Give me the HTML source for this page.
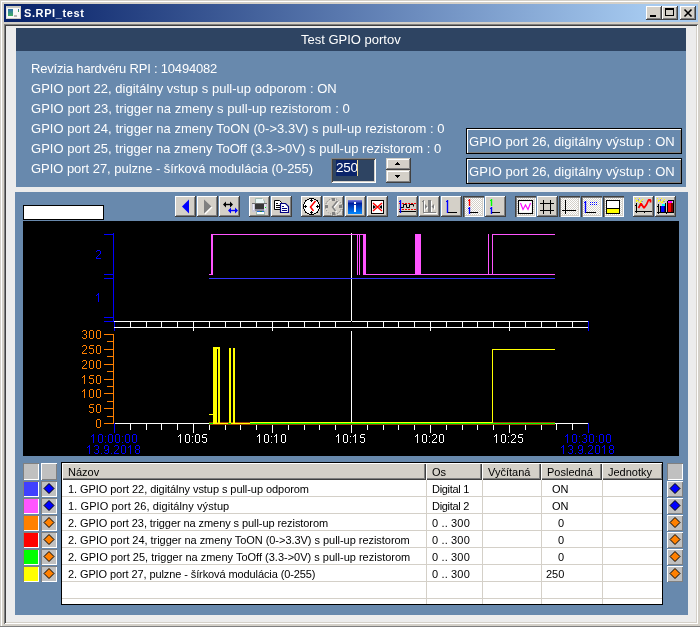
<!DOCTYPE html><html><head><meta charset="utf-8"><style>
*{margin:0;padding:0;box-sizing:border-box}
html,body{width:700px;height:627px;overflow:hidden;background:#D4D0C8;font-family:"Liberation Sans", sans-serif;position:relative}
.a{position:absolute}
.t{position:absolute;white-space:pre;line-height:1;will-change:transform}
svg{will-change:transform}
.raised{box-shadow:inset -1px -1px #404040,inset 1px 1px #fff,inset -2px -2px #808080}
.sunken{box-shadow:inset 1px 1px #808080,inset -1px -1px #fff,inset 2px 2px #404040,inset -2px -2px #D4D0C8}

</style></head><body>
<div class="a" style="left:1px;top:1px;width:698px;height:1px;background:#fff;"></div>
<div class="a" style="left:1px;top:1px;width:1px;height:626px;background:#fff;"></div>
<div class="a" style="left:4px;top:4px;width:694px;height:18px;background:linear-gradient(90deg,#0A246A 18px,#A6CAF0 646px);"></div>
<div class="a" style="left:6px;top:6px;width:15px;height:13px;background:#F8F8F8;border-top:2px solid #C8C8C0;border-bottom:1px solid #D4D0C8;border-left:1px solid #E0E0E0;border-right:1px solid #D4D0C8"></div>
<div class="a" style="left:8px;top:9px;width:5px;height:7px;background:linear-gradient(180deg,#3070B0,#40B060);"></div>
<div class="a" style="left:18px;top:9px;width:1px;height:3px;background:linear-gradient(180deg,#3060C0,#40B040);"></div>
<div class="a" style="left:14px;top:15px;width:3px;height:2px;background:#b8b8b8;"></div>
<div class="t" style="left:23.5px;top:8px;font-size:11px;color:#fff;font-weight:bold;letter-spacing:0.6px">S.RPI_test</div>
<div class="a raised" style="left:646px;top:6px;width:16px;height:14px;background:#D4D0C8"></div>
<div class="a raised" style="left:662px;top:6px;width:16px;height:14px;background:#D4D0C8"></div>
<div class="a raised" style="left:680px;top:6px;width:16px;height:14px;background:#D4D0C8"></div>
<div class="a" style="left:650px;top:15px;width:6px;height:2px;background:#000;"></div>
<div class="a" style="left:665px;top:8px;width:9px;height:8px;border:1px solid #000;border-top-width:2px"></div>
<svg class="a" style="left:680px;top:6px" width="16" height="14"><path d="M4.5 3.5 L11.5 10.5 M11.5 3.5 L4.5 10.5" stroke="#000" stroke-width="1.6"/></svg>
<div class="a" style="left:4px;top:24px;width:694px;height:600px;background:#ECECEC;box-shadow:inset 1px 1px #808080,inset -1px -1px #fff,inset 2px 2px #404040,inset -2px -2px #D4D0C8"></div>
<div class="a" style="left:0px;top:626px;width:700px;height:1px;background:#808080;"></div>
<div class="a" style="left:16px;top:28px;width:670px;height:159px;background:#6889AD;"></div>
<div class="a" style="left:16px;top:28px;width:670px;height:23px;background:#2E4462;"></div>
<div class="t" style="left:301px;top:33px;font-size:13px;color:#fff;">Test GPIO portov</div>
<div class="t" style="left:31px;top:62px;font-size:13px;color:#fff;letter-spacing:-0.2px">Revízia hardvéru RPI : 10494082</div>
<div class="t" style="left:31px;top:82px;font-size:13px;color:#fff;letter-spacing:0.03px">GPIO port 22, digitálny vstup s pull-up odporom : ON</div>
<div class="t" style="left:31px;top:102px;font-size:13px;color:#fff;letter-spacing:0.055px">GPIO port 23, trigger na zmeny s pull-up rezistorom : 0</div>
<div class="t" style="left:31px;top:122px;font-size:13px;color:#fff;letter-spacing:0.043px">GPIO port 24, trigger na zmeny ToON (0-&gt;3.3V) s pull-up rezistorom : 0</div>
<div class="t" style="left:31px;top:142px;font-size:13px;color:#fff;letter-spacing:0.03px">GPIO port 25, trigger na zmeny ToOff (3.3-&gt;0V) s pull-up rezistorom : 0</div>
<div class="t" style="left:31px;top:162px;font-size:13px;color:#fff;letter-spacing:-0.04px">GPIO port 27, pulzne - šírková modulácia (0-255)</div>
<div class="a" style="left:331px;top:158px;width:45px;height:25px;background:#2E4462;box-shadow:inset 1px 1px #808080,inset -1px -1px #fff,inset 2px 2px #404040,inset -2px -2px #D4D0C8"></div>
<div class="a" style="left:336px;top:160px;width:21px;height:16px;background:#0A246A;"></div>
<div class="t" style="left:335.5px;top:161px;font-size:13.5px;color:#fff;letter-spacing:-0.25px">250</div>
<div class="a" style="left:357px;top:160px;width:1px;height:16px;background:#F0D890;"></div>
<div class="a" style="left:386px;top:158px;width:25px;height:12px;background:#D4D0C8;box-shadow:inset -1px -1px #404040,inset 1px 1px #D4D0C8,inset -2px -2px #808080,inset 2px 2px #fff"></div>
<div class="a" style="left:386px;top:170px;width:25px;height:13px;background:#D4D0C8;box-shadow:inset -1px -1px #404040,inset 1px 1px #D4D0C8,inset -2px -2px #808080,inset 2px 2px #fff"></div>
<div class="a" style="left:397px;top:162px;width:1px;height:1px;background:#000;"></div>
<div class="a" style="left:396px;top:163px;width:3px;height:1px;background:#000;"></div>
<div class="a" style="left:395px;top:164px;width:5px;height:1px;background:#000;"></div>
<div class="a" style="left:395px;top:175px;width:5px;height:1px;background:#000;"></div>
<div class="a" style="left:396px;top:176px;width:3px;height:1px;background:#000;"></div>
<div class="a" style="left:397px;top:177px;width:1px;height:1px;background:#000;"></div>
<div class="a" style="left:466px;top:128px;width:216px;height:26px;background:#6889AD;box-shadow:inset 1px 1px #000,inset -1px -1px #000,inset 2px 2px #fff,inset -2px -2px #808080"></div>
<div class="t" style="left:469px;top:135px;font-size:13px;color:#fff;letter-spacing:0.08px">GPIO port 26, digitálny výstup : ON</div>
<div class="a" style="left:466px;top:158px;width:216px;height:26px;background:#6889AD;box-shadow:inset 1px 1px #000,inset -1px -1px #000,inset 2px 2px #fff,inset -2px -2px #808080"></div>
<div class="t" style="left:469px;top:165px;font-size:13px;color:#fff;letter-spacing:0.08px">GPIO port 26, digitálny výstup : ON</div>
<div class="a" style="left:15px;top:192px;width:673px;height:423px;background:#6889AD;"></div>
<div class="a" style="left:23px;top:205px;width:81px;height:15px;background:#fff;border:1px solid #000"></div>
<div class="a" style="left:23px;top:221px;width:656px;height:235px;background:#000;"></div>
<div class="a" style="left:175px;top:196px;width:21px;height:21px;box-shadow:inset -1px -1px #404040,inset 1px 1px #fff,inset -2px -2px #808080;background:#D4D0C8"></div>
<div class="a" style="left:197px;top:196px;width:21px;height:21px;box-shadow:inset -1px -1px #404040,inset 1px 1px #fff,inset -2px -2px #808080;background:#D4D0C8"></div>
<div class="a" style="left:219px;top:196px;width:21px;height:21px;box-shadow:inset -1px -1px #404040,inset 1px 1px #fff,inset -2px -2px #808080;background:#D4D0C8"></div>
<div class="a" style="left:249px;top:196px;width:21px;height:21px;box-shadow:inset -1px -1px #404040,inset 1px 1px #fff,inset -2px -2px #808080;background:#D4D0C8"></div>
<div class="a" style="left:271px;top:196px;width:21px;height:21px;box-shadow:inset -1px -1px #404040,inset 1px 1px #fff,inset -2px -2px #808080;background:#D4D0C8"></div>
<div class="a" style="left:301px;top:196px;width:21px;height:21px;box-shadow:inset -1px -1px #404040,inset 1px 1px #fff,inset -2px -2px #808080;background:#D4D0C8"></div>
<div class="a" style="left:323px;top:196px;width:21px;height:21px;box-shadow:inset -1px -1px #404040,inset 1px 1px #fff,inset -2px -2px #808080;background:#D4D0C8"></div>
<div class="a" style="left:345px;top:196px;width:21px;height:21px;box-shadow:inset -1px -1px #404040,inset 1px 1px #fff,inset -2px -2px #808080;background:#D4D0C8"></div>
<div class="a" style="left:367px;top:196px;width:21px;height:21px;box-shadow:inset -1px -1px #404040,inset 1px 1px #fff,inset -2px -2px #808080;background:#D4D0C8"></div>
<div class="a" style="left:397px;top:196px;width:21px;height:21px;box-shadow:inset -1px -1px #404040,inset 1px 1px #fff,inset -2px -2px #808080;background:#D4D0C8"></div>
<div class="a" style="left:419px;top:196px;width:21px;height:21px;box-shadow:inset -1px -1px #404040,inset 1px 1px #fff,inset -2px -2px #808080;background:#D4D0C8"></div>
<div class="a" style="left:441px;top:196px;width:21px;height:21px;box-shadow:inset -1px -1px #404040,inset 1px 1px #fff,inset -2px -2px #808080;background:#D4D0C8"></div>
<div class="a" style="left:463px;top:196px;width:21px;height:21px;box-shadow:inset 1px 1px #404040,inset 2px 2px #808080,inset -1px -1px #fff,inset -2px -2px #D4D0C8;background-color:#D4D0C8;background-image:repeating-conic-gradient(#fff 0 25%,#D4D0C8 0 50%);background-size:2px 2px;background-position:1px 0"></div>
<div class="a" style="left:485px;top:196px;width:21px;height:21px;box-shadow:inset -1px -1px #404040,inset 1px 1px #fff,inset -2px -2px #808080;background:#D4D0C8"></div>
<div class="a" style="left:515px;top:196px;width:21px;height:21px;box-shadow:inset 1px 1px #404040,inset 2px 2px #808080,inset -1px -1px #fff,inset -2px -2px #D4D0C8;background-color:#D4D0C8;background-image:repeating-conic-gradient(#fff 0 25%,#D4D0C8 0 50%);background-size:2px 2px;background-position:1px 0"></div>
<div class="a" style="left:537px;top:196px;width:21px;height:21px;box-shadow:inset -1px -1px #404040,inset 1px 1px #fff,inset -2px -2px #808080;background:#D4D0C8"></div>
<div class="a" style="left:559px;top:196px;width:21px;height:21px;box-shadow:inset 1px 1px #404040,inset 2px 2px #808080,inset -1px -1px #fff,inset -2px -2px #D4D0C8;background-color:#D4D0C8;background-image:repeating-conic-gradient(#fff 0 25%,#D4D0C8 0 50%);background-size:2px 2px;background-position:1px 0"></div>
<div class="a" style="left:581px;top:196px;width:21px;height:21px;box-shadow:inset 1px 1px #404040,inset 2px 2px #808080,inset -1px -1px #fff,inset -2px -2px #D4D0C8;background-color:#D4D0C8;background-image:repeating-conic-gradient(#fff 0 25%,#D4D0C8 0 50%);background-size:2px 2px;background-position:1px 0"></div>
<div class="a" style="left:603px;top:196px;width:21px;height:21px;box-shadow:inset 1px 1px #404040,inset 2px 2px #808080,inset -1px -1px #fff,inset -2px -2px #D4D0C8;background-color:#D4D0C8;background-image:repeating-conic-gradient(#fff 0 25%,#D4D0C8 0 50%);background-size:2px 2px;background-position:1px 0"></div>
<div class="a" style="left:633px;top:196px;width:21px;height:21px;box-shadow:inset -1px -1px #404040,inset 1px 1px #fff,inset -2px -2px #808080;background:#D4D0C8"></div>
<div class="a" style="left:655px;top:196px;width:21px;height:21px;box-shadow:inset -1px -1px #404040,inset 1px 1px #fff,inset -2px -2px #808080;background:#D4D0C8"></div>
<svg class="a" style="left:0;top:0" width="700" height="230" viewBox="0 0 700 230"><path d="M182 206.5 L189 199.5 L189 213.5 Z" fill="#0000FF"/><path d="M204 199.5 L211.5 206.5 L204 213.5 Z" fill="#808080"/><path d="M212 207 L205 214" stroke="#fff" stroke-width="1.2"/><path d="M224 204.5 L232 204.5" stroke="#000" stroke-width="1.4"/><path d="M223 204.5 L226 201.5 L226 207.5 Z M233 204.5 L230 201.5 L230 207.5 Z" fill="#000"/><path d="M229 210.5 L237 210.5" stroke="#00f" stroke-width="1.4"/><path d="M228 210.5 L231 207.5 L231 213.5 Z M238 210.5 L235 207.5 L235 213.5 Z" fill="#00f"/><path d="M255.5 198.5 H262 L264.5 201 V203.5 H255.5 Z" fill="#E8F4F4" stroke="#A0B8B0"/><rect x="262" y="199" width="1" height="1" fill="#fff"/><rect x="252" y="203" width="15" height="9" fill="#C8C8D8"/><rect x="252" y="203" width="15" height="1" fill="#707070"/><rect x="255" y="204" width="9" height="5" fill="#383838"/><rect x="255" y="209" width="9" height="2" fill="#9090A0"/><rect x="253" y="204" width="1" height="6" fill="#F0F0F8"/><rect x="264" y="204" width="2" height="6" fill="#E0E0F0"/><rect x="256.5" y="211.5" width="8" height="3" fill="#fff" stroke="#A0B8B0"/><rect x="257" y="211" width="3" height="1" fill="#2070E0"/><rect x="260" y="211" width="2" height="1" fill="#208040"/><rect x="262" y="211" width="2" height="1" fill="#2070E0"/><rect x="265" y="207" width="1" height="1" fill="#0f0"/><path d="M274.5 200.5 H279.5 L281.5 202.5 V209.5 H274.5 Z" fill="#fff" stroke="#000"/><path d="M276 203.5 H278 M276 205.5 H280 M276 207.5 H280" stroke="#000"/><path d="M280.5 203.5 H285.5 L288.5 206.5 V212.5 H280.5 Z" fill="#fff" stroke="#000080" stroke-width="1.2"/><path d="M282 206.5 H284 M282 208.5 H287 M282 210.5 H287" stroke="#000080"/><circle cx="311.5" cy="206.5" r="7.6" fill="#fff"/><rect x="309" y="198" width="5" height="1" fill="#000"/><rect x="307" y="199" width="2" height="1" fill="#000"/><rect x="311" y="199" width="1" height="1" fill="#000"/><rect x="314" y="199" width="2" height="1" fill="#000"/><rect x="305" y="200" width="2" height="1" fill="#000"/><rect x="310" y="200" width="3" height="1" fill="#000"/><rect x="316" y="200" width="2" height="1" fill="#000"/><rect x="305" y="201" width="1" height="1" fill="#000"/><rect x="311" y="201" width="1" height="1" fill="#000"/><rect x="317" y="201" width="1" height="1" fill="#000"/><rect x="304" y="202" width="1" height="1" fill="#000"/><rect x="318" y="202" width="1" height="1" fill="#000"/><rect x="304" y="203" width="1" height="1" fill="#000"/><rect x="318" y="203" width="1" height="1" fill="#000"/><rect x="303" y="204" width="1" height="1" fill="#000"/><rect x="319" y="204" width="1" height="1" fill="#000"/><rect x="303" y="205" width="1" height="1" fill="#000"/><rect x="305" y="205" width="1" height="1" fill="#000"/><rect x="317" y="205" width="1" height="1" fill="#000"/><rect x="319" y="205" width="1" height="1" fill="#000"/><rect x="303" y="206" width="4" height="1" fill="#000"/><rect x="316" y="206" width="4" height="1" fill="#000"/><rect x="303" y="207" width="1" height="1" fill="#000"/><rect x="305" y="207" width="1" height="1" fill="#000"/><rect x="317" y="207" width="1" height="1" fill="#000"/><rect x="319" y="207" width="1" height="1" fill="#000"/><rect x="303" y="208" width="1" height="1" fill="#000"/><rect x="319" y="208" width="1" height="1" fill="#000"/><rect x="304" y="209" width="1" height="1" fill="#000"/><rect x="318" y="209" width="1" height="1" fill="#000"/><rect x="304" y="210" width="1" height="1" fill="#000"/><rect x="318" y="210" width="1" height="1" fill="#000"/><rect x="305" y="211" width="1" height="1" fill="#000"/><rect x="311" y="211" width="1" height="1" fill="#000"/><rect x="317" y="211" width="1" height="1" fill="#000"/><rect x="305" y="212" width="2" height="1" fill="#000"/><rect x="310" y="212" width="3" height="1" fill="#000"/><rect x="316" y="212" width="2" height="1" fill="#000"/><rect x="307" y="213" width="2" height="1" fill="#000"/><rect x="311" y="213" width="1" height="1" fill="#000"/><rect x="314" y="213" width="2" height="1" fill="#000"/><rect x="309" y="214" width="5" height="1" fill="#000"/><path d="M315.5 201 L310.5 207 L313.5 211" stroke="#f00" stroke-width="1.5" fill="none"/><circle cx="333.5" cy="206.5" r="8" fill="none" stroke="#808080" stroke-width="1" stroke-dasharray="1.5 1"/><circle cx="334.5" cy="207.5" r="8" fill="none" stroke="#fff" stroke-width="0.6" stroke-dasharray="1.5 1"/><rect x="332" y="198" width="3" height="3" fill="#808080"/><rect x="332" y="212" width="3" height="3" fill="#808080"/><rect x="325" y="205" width="3" height="3" fill="#808080"/><rect x="339" y="205" width="3" height="3" fill="#808080"/><path d="M338.5 202 L333.5 208 L336.5 212" stroke="#fff" stroke-width="1.2" fill="none"/><path d="M337.5 201 L332.5 207 L335.5 211" stroke="#808080" stroke-width="1.5" fill="none"/><defs><linearGradient id="ig" x1="0" y1="0" x2="0" y2="1"><stop offset="0" stop-color="#8080E0"/><stop offset="0.25" stop-color="#0020A0"/><stop offset="1" stop-color="#0088FF"/></linearGradient></defs><rect x="348" y="200" width="14" height="14" fill="url(#ig)"/><rect x="354" y="202" width="2" height="2" fill="#fff"/><rect x="354" y="205" width="2" height="7" fill="#fff"/><rect x="371.5" y="200.5" width="12" height="13" fill="#fff" stroke="#000"/><path d="M373 203 L382 211 M382 203 L373 211" stroke="#f00" stroke-width="1.4"/><path d="M373 205 L376 207 L373 209 Z M382 205 L379 207 L382 209 Z" fill="#000"/><path d="M399 203.5 H416 M399 209.5 H416" stroke="#f00" stroke-dasharray="2 1"/><path d="M401 207.5 H403.5 V204.5 H406.5 V207.5 H409.5 V204.5 H413.5 V206.5" stroke="#000" fill="none"/><path d="M399 211.5 H416" stroke="#000"/><path d="M400.5 200 V213" stroke="#00f" stroke-width="1.3"/><path d="M399 201.5 H400" stroke="#00f"/><path d="M424.5 201 V214 M424 213.5 H437 M423 202.5 H424" stroke="#fff"/><rect x="429" y="201" width="3" height="12" fill="#fff"/><path d="M426 207.5 H428 M433 207.5 H435" stroke="#fff"/><path d="M428.5 207.5 L426 205 L426 210 Z M432.5 207.5 L435 205 L435 210 Z" fill="#fff"/><path d="M423.5 200 V213 M423 212.5 H436 M422 201.5 H423" stroke="#808080"/><rect x="428" y="200" width="3" height="12" fill="#808080"/><path d="M425 206.5 H427 M432 206.5 H434" stroke="#808080"/><path d="M427.5 206.5 L425 204 L425 209 Z M431.5 206.5 L434 204 L434 209 Z" fill="#808080"/><path d="M447.5 200 V213" stroke="#00f" stroke-width="1.4"/><path d="M446 201.5 H447" stroke="#00f"/><path d="M448 212.5 H457" stroke="#000"/><path d="M469.5 199 V206" stroke="#f00" stroke-width="1.4"/><path d="M468 200.5 H469" stroke="#f00"/><path d="M469.5 207 V214" stroke="#00f" stroke-width="1.4"/><path d="M468 208.5 H469" stroke="#00f"/><path d="M470 212.5 H478" stroke="#000"/><path d="M491.5 199 V206" stroke="#0f0" stroke-width="1.4"/><path d="M490 200.5 H491" stroke="#0f0"/><path d="M491.5 207 V214" stroke="#00f" stroke-width="1.4"/><path d="M490 208.5 H491" stroke="#00f"/><path d="M492 212.5 H500" stroke="#000"/><rect x="518.5" y="200.5" width="14" height="13" fill="#fff" stroke="#000" stroke-width="1.1"/><path d="M520.5 203 L523 209.5 L525.5 205 L528 209.5 L530.5 203" stroke="#f0f" stroke-width="1.1" fill="none"/><path d="M543.5 200 V214 M550.5 200 V214 M540 203.5 H554 M540 210.5 H554" stroke="#000"/><path d="M565.5 200 V214 M562 210.5 H576" stroke="#000"/><path d="M585.5 201 V213" stroke="#00f" stroke-width="1.4"/><path d="M584 202.5 H585" stroke="#00f"/><path d="M586 212.5 H596" stroke="#000"/><path d="M590 202.5 H598 M590 204.5 H598" stroke="#00f" stroke-dasharray="1 1"/><rect x="606.5" y="200.5" width="13" height="13" fill="#fff" stroke="#000"/><rect x="607" y="209" width="12" height="4" fill="#ff0"/><path d="M607 208.5 H619" stroke="#000"/><rect x="635" y="198" width="1" height="1" fill="#ff0"/><rect x="639" y="198" width="1" height="1" fill="#ff0"/><rect x="642" y="199" width="1" height="1" fill="#ff0"/><rect x="636" y="200" width="1" height="1" fill="#ff0"/><rect x="638" y="201" width="1" height="1" fill="#ff0"/><rect x="641" y="200" width="1" height="1" fill="#ff0"/><rect x="636" y="201" width="1" height="1" fill="#ff0"/><rect x="639" y="202" width="1" height="1" fill="#ff0"/><rect x="640" y="202" width="1" height="1" fill="#ff0"/><rect x="637" y="200" width="1" height="1" fill="#ff0"/><rect x="640" y="201" width="1" height="1" fill="#ff0"/><rect x="638" y="199" width="1" height="2" fill="#9898A8"/><rect x="641" y="201" width="2" height="1" fill="#9898A8"/><rect x="636" y="203" width="1" height="10" fill="#000"/><rect x="635" y="211" width="17" height="1" fill="#000"/><rect x="636" y="212" width="1" height="1" fill="#000"/><rect x="644" y="212" width="1" height="1" fill="#000"/><rect x="635" y="205" width="1" height="1" fill="#000"/><path d="M638.5 208 L641 203.5 L644 208 L646.5 204.5 L648.5 200 H650.5 V202.5" stroke="#f00" stroke-width="1.8" fill="none" stroke-linejoin="bevel"/><rect x="657" y="198" width="1" height="1" fill="#ff0"/><rect x="661" y="198" width="1" height="1" fill="#ff0"/><rect x="664" y="199" width="1" height="1" fill="#ff0"/><rect x="658" y="200" width="1" height="1" fill="#ff0"/><rect x="660" y="201" width="1" height="1" fill="#ff0"/><rect x="663" y="200" width="1" height="1" fill="#ff0"/><rect x="658" y="201" width="1" height="1" fill="#ff0"/><rect x="661" y="202" width="1" height="1" fill="#ff0"/><rect x="662" y="202" width="1" height="1" fill="#ff0"/><rect x="659" y="200" width="1" height="1" fill="#ff0"/><rect x="662" y="201" width="1" height="1" fill="#ff0"/><rect x="660" y="199" width="1" height="2" fill="#9898A8"/><rect x="663" y="201" width="2" height="1" fill="#9898A8"/><rect x="658" y="204" width="1" height="9" fill="#000"/><rect x="657" y="212" width="17" height="1" fill="#000"/><rect x="658" y="213" width="1" height="1" fill="#000"/><rect x="666" y="213" width="1" height="1" fill="#000"/><rect x="657" y="206" width="1" height="1" fill="#000"/><rect x="661" y="206" width="3" height="6" fill="#0000FF"/><rect x="664" y="206" width="1" height="6" fill="#000080"/><rect x="662" y="204" width="3" height="2" fill="#00FFFF"/><rect x="665" y="203" width="1" height="9" fill="#000"/><rect x="660" y="206" width="1" height="6" fill="#000"/><rect x="667" y="201" width="1" height="11" fill="#000"/><rect x="668" y="200" width="5" height="1" fill="#000"/><rect x="673" y="200" width="1" height="12" fill="#000"/><rect x="668" y="201" width="4" height="2" fill="#FF00FF"/><rect x="668" y="203" width="3" height="9" fill="#FF0000"/><rect x="671" y="203" width="2" height="9" fill="#800000"/></svg>
<svg class="a" style="left:0;top:0" width="700" height="460" viewBox="0 0 700 460" shape-rendering="crispEdges"><rect x="113" y="233" width="1" height="89" fill="#0000FF"/><rect x="104" y="234" width="9" height="1" fill="#0000FF"/><rect x="104" y="274" width="9" height="1" fill="#0000FF"/><rect x="104" y="278" width="9" height="1" fill="#0000FF"/><rect x="104" y="317" width="9" height="1" fill="#0000FF"/><rect x="104" y="321" width="9" height="1" fill="#0000FF"/><rect x="114" y="321" width="1" height="10" fill="#0000FF"/><rect x="114" y="321" width="474" height="1" fill="#FFFFFF"/><rect x="114" y="327" width="474" height="1" fill="#FFFFFF"/><rect x="130" y="322" width="1" height="5" fill="#FFFFFF"/><rect x="146" y="322" width="1" height="5" fill="#FFFFFF"/><rect x="161" y="322" width="1" height="5" fill="#FFFFFF"/><rect x="177" y="322" width="1" height="5" fill="#FFFFFF"/><rect x="193" y="322" width="1" height="5" fill="#FFFFFF"/><rect x="193" y="328" width="1" height="3" fill="#FFFFFF"/><rect x="209" y="322" width="1" height="5" fill="#FFFFFF"/><rect x="225" y="322" width="1" height="5" fill="#FFFFFF"/><rect x="240" y="322" width="1" height="5" fill="#FFFFFF"/><rect x="256" y="322" width="1" height="5" fill="#FFFFFF"/><rect x="272" y="322" width="1" height="5" fill="#FFFFFF"/><rect x="272" y="328" width="1" height="3" fill="#FFFFFF"/><rect x="288" y="322" width="1" height="5" fill="#FFFFFF"/><rect x="304" y="322" width="1" height="5" fill="#FFFFFF"/><rect x="319" y="322" width="1" height="5" fill="#FFFFFF"/><rect x="335" y="322" width="1" height="5" fill="#FFFFFF"/><rect x="367" y="322" width="1" height="5" fill="#FFFFFF"/><rect x="383" y="322" width="1" height="5" fill="#FFFFFF"/><rect x="398" y="322" width="1" height="5" fill="#FFFFFF"/><rect x="414" y="322" width="1" height="5" fill="#FFFFFF"/><rect x="430" y="322" width="1" height="5" fill="#FFFFFF"/><rect x="430" y="328" width="1" height="3" fill="#FFFFFF"/><rect x="446" y="322" width="1" height="5" fill="#FFFFFF"/><rect x="462" y="322" width="1" height="5" fill="#FFFFFF"/><rect x="477" y="322" width="1" height="5" fill="#FFFFFF"/><rect x="493" y="322" width="1" height="5" fill="#FFFFFF"/><rect x="509" y="322" width="1" height="5" fill="#FFFFFF"/><rect x="509" y="328" width="1" height="3" fill="#FFFFFF"/><rect x="525" y="322" width="1" height="5" fill="#FFFFFF"/><rect x="541" y="322" width="1" height="5" fill="#FFFFFF"/><rect x="556" y="322" width="1" height="5" fill="#FFFFFF"/><rect x="572" y="322" width="1" height="5" fill="#FFFFFF"/><rect x="588" y="321" width="1" height="10" fill="#0000FF"/><rect x="113" y="334" width="1" height="90" fill="#FF8000"/><rect x="104" y="334" width="9" height="1" fill="#FF8000"/><rect x="104" y="349" width="9" height="1" fill="#FF8000"/><rect x="104" y="364" width="9" height="1" fill="#FF8000"/><rect x="104" y="379" width="9" height="1" fill="#FF8000"/><rect x="104" y="393" width="9" height="1" fill="#FF8000"/><rect x="104" y="408" width="9" height="1" fill="#FF8000"/><rect x="104" y="423" width="9" height="1" fill="#FF8000"/><rect x="107" y="341" width="6" height="1" fill="#FF8000"/><rect x="107" y="356" width="6" height="1" fill="#FF8000"/><rect x="107" y="371" width="6" height="1" fill="#FF8000"/><rect x="107" y="386" width="6" height="1" fill="#FF8000"/><rect x="107" y="401" width="6" height="1" fill="#FF8000"/><rect x="107" y="416" width="6" height="1" fill="#FF8000"/><rect x="114" y="423" width="474" height="1" fill="#FFFFFF"/><rect x="130" y="424" width="1" height="6" fill="#FFFFFF"/><rect x="146" y="424" width="1" height="6" fill="#FFFFFF"/><rect x="161" y="424" width="1" height="6" fill="#FFFFFF"/><rect x="177" y="424" width="1" height="6" fill="#FFFFFF"/><rect x="193" y="424" width="1" height="9" fill="#FFFFFF"/><rect x="209" y="424" width="1" height="6" fill="#FFFFFF"/><rect x="225" y="424" width="1" height="6" fill="#FFFFFF"/><rect x="240" y="424" width="1" height="6" fill="#FFFFFF"/><rect x="256" y="424" width="1" height="6" fill="#FFFFFF"/><rect x="272" y="424" width="1" height="9" fill="#FFFFFF"/><rect x="288" y="424" width="1" height="6" fill="#FFFFFF"/><rect x="304" y="424" width="1" height="6" fill="#FFFFFF"/><rect x="319" y="424" width="1" height="6" fill="#FFFFFF"/><rect x="335" y="424" width="1" height="6" fill="#FFFFFF"/><rect x="351" y="424" width="1" height="9" fill="#FFFFFF"/><rect x="367" y="424" width="1" height="6" fill="#FFFFFF"/><rect x="383" y="424" width="1" height="6" fill="#FFFFFF"/><rect x="398" y="424" width="1" height="6" fill="#FFFFFF"/><rect x="414" y="424" width="1" height="6" fill="#FFFFFF"/><rect x="430" y="424" width="1" height="9" fill="#FFFFFF"/><rect x="446" y="424" width="1" height="6" fill="#FFFFFF"/><rect x="462" y="424" width="1" height="6" fill="#FFFFFF"/><rect x="477" y="424" width="1" height="6" fill="#FFFFFF"/><rect x="493" y="424" width="1" height="6" fill="#FFFFFF"/><rect x="509" y="424" width="1" height="9" fill="#FFFFFF"/><rect x="525" y="424" width="1" height="6" fill="#FFFFFF"/><rect x="541" y="424" width="1" height="6" fill="#FFFFFF"/><rect x="556" y="424" width="1" height="6" fill="#FFFFFF"/><rect x="572" y="424" width="1" height="6" fill="#FFFFFF"/><rect x="114" y="423" width="1" height="10" fill="#0000FF"/><rect x="588" y="423" width="1" height="10" fill="#0000FF"/><rect x="351" y="233" width="1" height="88" fill="#FFFFFF"/><rect x="351" y="331" width="1" height="93" fill="#FFFFFF"/><rect x="351" y="321" width="1" height="1" fill="#000"/><rect x="351" y="327" width="1" height="1" fill="#fff"/><rect x="209" y="278" width="346" height="1" fill="#3333FF"/><rect x="209" y="274" width="3" height="1" fill="#FF55FF"/><rect x="211" y="234" width="2" height="41" fill="#FF55FF"/><rect x="211" y="234" width="154" height="1" fill="#FF55FF"/><rect x="357" y="234" width="1" height="41" fill="#FF55FF"/><rect x="359" y="234" width="1" height="41" fill="#FF55FF"/><rect x="363" y="234" width="3" height="41" fill="#FF55FF"/><rect x="363" y="274" width="192" height="1" fill="#FF55FF"/><rect x="415" y="234" width="6" height="41" fill="#FF55FF"/><rect x="488" y="234" width="1" height="41" fill="#FF55FF"/><rect x="492" y="234" width="1" height="41" fill="#FF55FF"/><rect x="492" y="234" width="63" height="1" fill="#FF55FF"/><rect x="209" y="422" width="346" height="1" fill="#A04000"/><rect x="209" y="424" width="346" height="1" fill="#A04000"/><rect x="213" y="423" width="37" height="1" fill="#FFFF00"/><rect x="250" y="422" width="242" height="1" fill="#FFFF00"/><rect x="209" y="423" width="4" height="1" fill="#00FF00"/><rect x="228" y="423" width="3" height="1" fill="#00FF00"/><rect x="250" y="423" width="305" height="1" fill="#00FF00"/><rect x="209" y="414" width="4" height="1" fill="#FFFF00"/><rect x="213" y="347" width="4" height="77" fill="#FFFF00"/><rect x="213" y="347" width="7" height="2" fill="#FFFF00"/><rect x="218" y="347" width="2" height="77" fill="#FFFF00"/><rect x="229" y="348" width="2" height="75" fill="#FFFF00"/><rect x="233" y="348" width="2" height="75" fill="#FFFF00"/><rect x="492" y="349" width="1" height="74" fill="#FFFF00"/><rect x="492" y="349" width="63" height="1" fill="#FFFF00"/><path d="M97 250h3v1h-3zM96 251h1v1h-1zM100 251h1v1h-1zM100 252h1v1h-1zM100 253h1v1h-1zM99 254h1v1h-1zM98 255h1v1h-1zM97 256h1v1h-1zM96 257h1v1h-1zM96 258h5v1h-5z" fill="#0000FF"/><path d="M98 293h1v1h-1zM97 294h2v1h-2zM96 295h1v1h-1zM98 295h1v1h-1zM98 296h1v1h-1zM98 297h1v1h-1zM98 298h1v1h-1zM98 299h1v1h-1zM98 300h1v1h-1zM98 301h1v1h-1z" fill="#0000FF"/><path d="M83 330h3v1h-3zM82 331h1v1h-1zM86 331h1v1h-1zM86 332h1v1h-1zM86 333h1v1h-1zM84 334h2v1h-2zM86 335h1v1h-1zM86 336h1v1h-1zM82 337h1v1h-1zM86 337h1v1h-1zM83 338h3v1h-3zM90 330h3v1h-3zM89 331h1v1h-1zM93 331h1v1h-1zM89 332h1v1h-1zM93 332h1v1h-1zM89 333h1v1h-1zM93 333h1v1h-1zM89 334h1v1h-1zM93 334h1v1h-1zM89 335h1v1h-1zM93 335h1v1h-1zM89 336h1v1h-1zM93 336h1v1h-1zM89 337h1v1h-1zM93 337h1v1h-1zM90 338h3v1h-3zM97 330h3v1h-3zM96 331h1v1h-1zM100 331h1v1h-1zM96 332h1v1h-1zM100 332h1v1h-1zM96 333h1v1h-1zM100 333h1v1h-1zM96 334h1v1h-1zM100 334h1v1h-1zM96 335h1v1h-1zM100 335h1v1h-1zM96 336h1v1h-1zM100 336h1v1h-1zM96 337h1v1h-1zM100 337h1v1h-1zM97 338h3v1h-3z" fill="#FF8000"/><path d="M83 345h3v1h-3zM82 346h1v1h-1zM86 346h1v1h-1zM86 347h1v1h-1zM86 348h1v1h-1zM85 349h1v1h-1zM84 350h1v1h-1zM83 351h1v1h-1zM82 352h1v1h-1zM82 353h5v1h-5zM90 345h4v1h-4zM89 346h1v1h-1zM89 347h1v1h-1zM89 348h4v1h-4zM93 349h1v1h-1zM93 350h1v1h-1zM93 351h1v1h-1zM89 352h1v1h-1zM93 352h1v1h-1zM90 353h3v1h-3zM97 345h3v1h-3zM96 346h1v1h-1zM100 346h1v1h-1zM96 347h1v1h-1zM100 347h1v1h-1zM96 348h1v1h-1zM100 348h1v1h-1zM96 349h1v1h-1zM100 349h1v1h-1zM96 350h1v1h-1zM100 350h1v1h-1zM96 351h1v1h-1zM100 351h1v1h-1zM96 352h1v1h-1zM100 352h1v1h-1zM97 353h3v1h-3z" fill="#FF8000"/><path d="M83 360h3v1h-3zM82 361h1v1h-1zM86 361h1v1h-1zM86 362h1v1h-1zM86 363h1v1h-1zM85 364h1v1h-1zM84 365h1v1h-1zM83 366h1v1h-1zM82 367h1v1h-1zM82 368h5v1h-5zM90 360h3v1h-3zM89 361h1v1h-1zM93 361h1v1h-1zM89 362h1v1h-1zM93 362h1v1h-1zM89 363h1v1h-1zM93 363h1v1h-1zM89 364h1v1h-1zM93 364h1v1h-1zM89 365h1v1h-1zM93 365h1v1h-1zM89 366h1v1h-1zM93 366h1v1h-1zM89 367h1v1h-1zM93 367h1v1h-1zM90 368h3v1h-3zM97 360h3v1h-3zM96 361h1v1h-1zM100 361h1v1h-1zM96 362h1v1h-1zM100 362h1v1h-1zM96 363h1v1h-1zM100 363h1v1h-1zM96 364h1v1h-1zM100 364h1v1h-1zM96 365h1v1h-1zM100 365h1v1h-1zM96 366h1v1h-1zM100 366h1v1h-1zM96 367h1v1h-1zM100 367h1v1h-1zM97 368h3v1h-3z" fill="#FF8000"/><path d="M84 375h1v1h-1zM83 376h2v1h-2zM82 377h1v1h-1zM84 377h1v1h-1zM84 378h1v1h-1zM84 379h1v1h-1zM84 380h1v1h-1zM84 381h1v1h-1zM84 382h1v1h-1zM84 383h1v1h-1zM90 375h4v1h-4zM89 376h1v1h-1zM89 377h1v1h-1zM89 378h4v1h-4zM93 379h1v1h-1zM93 380h1v1h-1zM93 381h1v1h-1zM89 382h1v1h-1zM93 382h1v1h-1zM90 383h3v1h-3zM97 375h3v1h-3zM96 376h1v1h-1zM100 376h1v1h-1zM96 377h1v1h-1zM100 377h1v1h-1zM96 378h1v1h-1zM100 378h1v1h-1zM96 379h1v1h-1zM100 379h1v1h-1zM96 380h1v1h-1zM100 380h1v1h-1zM96 381h1v1h-1zM100 381h1v1h-1zM96 382h1v1h-1zM100 382h1v1h-1zM97 383h3v1h-3z" fill="#FF8000"/><path d="M84 389h1v1h-1zM83 390h2v1h-2zM82 391h1v1h-1zM84 391h1v1h-1zM84 392h1v1h-1zM84 393h1v1h-1zM84 394h1v1h-1zM84 395h1v1h-1zM84 396h1v1h-1zM84 397h1v1h-1zM90 389h3v1h-3zM89 390h1v1h-1zM93 390h1v1h-1zM89 391h1v1h-1zM93 391h1v1h-1zM89 392h1v1h-1zM93 392h1v1h-1zM89 393h1v1h-1zM93 393h1v1h-1zM89 394h1v1h-1zM93 394h1v1h-1zM89 395h1v1h-1zM93 395h1v1h-1zM89 396h1v1h-1zM93 396h1v1h-1zM90 397h3v1h-3zM97 389h3v1h-3zM96 390h1v1h-1zM100 390h1v1h-1zM96 391h1v1h-1zM100 391h1v1h-1zM96 392h1v1h-1zM100 392h1v1h-1zM96 393h1v1h-1zM100 393h1v1h-1zM96 394h1v1h-1zM100 394h1v1h-1zM96 395h1v1h-1zM100 395h1v1h-1zM96 396h1v1h-1zM100 396h1v1h-1zM97 397h3v1h-3z" fill="#FF8000"/><path d="M90 404h4v1h-4zM89 405h1v1h-1zM89 406h1v1h-1zM89 407h4v1h-4zM93 408h1v1h-1zM93 409h1v1h-1zM93 410h1v1h-1zM89 411h1v1h-1zM93 411h1v1h-1zM90 412h3v1h-3zM97 404h3v1h-3zM96 405h1v1h-1zM100 405h1v1h-1zM96 406h1v1h-1zM100 406h1v1h-1zM96 407h1v1h-1zM100 407h1v1h-1zM96 408h1v1h-1zM100 408h1v1h-1zM96 409h1v1h-1zM100 409h1v1h-1zM96 410h1v1h-1zM100 410h1v1h-1zM96 411h1v1h-1zM100 411h1v1h-1zM97 412h3v1h-3z" fill="#FF8000"/><path d="M97 419h3v1h-3zM96 420h1v1h-1zM100 420h1v1h-1zM96 421h1v1h-1zM100 421h1v1h-1zM96 422h1v1h-1zM100 422h1v1h-1zM96 423h1v1h-1zM100 423h1v1h-1zM96 424h1v1h-1zM100 424h1v1h-1zM96 425h1v1h-1zM100 425h1v1h-1zM96 426h1v1h-1zM100 426h1v1h-1zM97 427h3v1h-3z" fill="#FF8000"/><path d="M180 434h1v1h-1zM179 435h2v1h-2zM178 436h1v1h-1zM180 436h1v1h-1zM180 437h1v1h-1zM180 438h1v1h-1zM180 439h1v1h-1zM180 440h1v1h-1zM180 441h1v1h-1zM180 442h1v1h-1zM186 434h3v1h-3zM185 435h1v1h-1zM189 435h1v1h-1zM185 436h1v1h-1zM189 436h1v1h-1zM185 437h1v1h-1zM189 437h1v1h-1zM185 438h1v1h-1zM189 438h1v1h-1zM185 439h1v1h-1zM189 439h1v1h-1zM185 440h1v1h-1zM189 440h1v1h-1zM185 441h1v1h-1zM189 441h1v1h-1zM186 442h3v1h-3zM192 436h1v1h-1zM192 442h1v1h-1zM196 434h3v1h-3zM195 435h1v1h-1zM199 435h1v1h-1zM195 436h1v1h-1zM199 436h1v1h-1zM195 437h1v1h-1zM199 437h1v1h-1zM195 438h1v1h-1zM199 438h1v1h-1zM195 439h1v1h-1zM199 439h1v1h-1zM195 440h1v1h-1zM199 440h1v1h-1zM195 441h1v1h-1zM199 441h1v1h-1zM196 442h3v1h-3zM203 434h4v1h-4zM202 435h1v1h-1zM202 436h1v1h-1zM202 437h4v1h-4zM206 438h1v1h-1zM206 439h1v1h-1zM206 440h1v1h-1zM202 441h1v1h-1zM206 441h1v1h-1zM203 442h3v1h-3z" fill="#FFFFFF"/><path d="M259 434h1v1h-1zM258 435h2v1h-2zM257 436h1v1h-1zM259 436h1v1h-1zM259 437h1v1h-1zM259 438h1v1h-1zM259 439h1v1h-1zM259 440h1v1h-1zM259 441h1v1h-1zM259 442h1v1h-1zM265 434h3v1h-3zM264 435h1v1h-1zM268 435h1v1h-1zM264 436h1v1h-1zM268 436h1v1h-1zM264 437h1v1h-1zM268 437h1v1h-1zM264 438h1v1h-1zM268 438h1v1h-1zM264 439h1v1h-1zM268 439h1v1h-1zM264 440h1v1h-1zM268 440h1v1h-1zM264 441h1v1h-1zM268 441h1v1h-1zM265 442h3v1h-3zM271 436h1v1h-1zM271 442h1v1h-1zM276 434h1v1h-1zM275 435h2v1h-2zM274 436h1v1h-1zM276 436h1v1h-1zM276 437h1v1h-1zM276 438h1v1h-1zM276 439h1v1h-1zM276 440h1v1h-1zM276 441h1v1h-1zM276 442h1v1h-1zM282 434h3v1h-3zM281 435h1v1h-1zM285 435h1v1h-1zM281 436h1v1h-1zM285 436h1v1h-1zM281 437h1v1h-1zM285 437h1v1h-1zM281 438h1v1h-1zM285 438h1v1h-1zM281 439h1v1h-1zM285 439h1v1h-1zM281 440h1v1h-1zM285 440h1v1h-1zM281 441h1v1h-1zM285 441h1v1h-1zM282 442h3v1h-3z" fill="#FFFFFF"/><path d="M338 434h1v1h-1zM337 435h2v1h-2zM336 436h1v1h-1zM338 436h1v1h-1zM338 437h1v1h-1zM338 438h1v1h-1zM338 439h1v1h-1zM338 440h1v1h-1zM338 441h1v1h-1zM338 442h1v1h-1zM344 434h3v1h-3zM343 435h1v1h-1zM347 435h1v1h-1zM343 436h1v1h-1zM347 436h1v1h-1zM343 437h1v1h-1zM347 437h1v1h-1zM343 438h1v1h-1zM347 438h1v1h-1zM343 439h1v1h-1zM347 439h1v1h-1zM343 440h1v1h-1zM347 440h1v1h-1zM343 441h1v1h-1zM347 441h1v1h-1zM344 442h3v1h-3zM350 436h1v1h-1zM350 442h1v1h-1zM355 434h1v1h-1zM354 435h2v1h-2zM353 436h1v1h-1zM355 436h1v1h-1zM355 437h1v1h-1zM355 438h1v1h-1zM355 439h1v1h-1zM355 440h1v1h-1zM355 441h1v1h-1zM355 442h1v1h-1zM361 434h4v1h-4zM360 435h1v1h-1zM360 436h1v1h-1zM360 437h4v1h-4zM364 438h1v1h-1zM364 439h1v1h-1zM364 440h1v1h-1zM360 441h1v1h-1zM364 441h1v1h-1zM361 442h3v1h-3z" fill="#FFFFFF"/><path d="M417 434h1v1h-1zM416 435h2v1h-2zM415 436h1v1h-1zM417 436h1v1h-1zM417 437h1v1h-1zM417 438h1v1h-1zM417 439h1v1h-1zM417 440h1v1h-1zM417 441h1v1h-1zM417 442h1v1h-1zM423 434h3v1h-3zM422 435h1v1h-1zM426 435h1v1h-1zM422 436h1v1h-1zM426 436h1v1h-1zM422 437h1v1h-1zM426 437h1v1h-1zM422 438h1v1h-1zM426 438h1v1h-1zM422 439h1v1h-1zM426 439h1v1h-1zM422 440h1v1h-1zM426 440h1v1h-1zM422 441h1v1h-1zM426 441h1v1h-1zM423 442h3v1h-3zM429 436h1v1h-1zM429 442h1v1h-1zM433 434h3v1h-3zM432 435h1v1h-1zM436 435h1v1h-1zM436 436h1v1h-1zM436 437h1v1h-1zM435 438h1v1h-1zM434 439h1v1h-1zM433 440h1v1h-1zM432 441h1v1h-1zM432 442h5v1h-5zM440 434h3v1h-3zM439 435h1v1h-1zM443 435h1v1h-1zM439 436h1v1h-1zM443 436h1v1h-1zM439 437h1v1h-1zM443 437h1v1h-1zM439 438h1v1h-1zM443 438h1v1h-1zM439 439h1v1h-1zM443 439h1v1h-1zM439 440h1v1h-1zM443 440h1v1h-1zM439 441h1v1h-1zM443 441h1v1h-1zM440 442h3v1h-3z" fill="#FFFFFF"/><path d="M496 434h1v1h-1zM495 435h2v1h-2zM494 436h1v1h-1zM496 436h1v1h-1zM496 437h1v1h-1zM496 438h1v1h-1zM496 439h1v1h-1zM496 440h1v1h-1zM496 441h1v1h-1zM496 442h1v1h-1zM502 434h3v1h-3zM501 435h1v1h-1zM505 435h1v1h-1zM501 436h1v1h-1zM505 436h1v1h-1zM501 437h1v1h-1zM505 437h1v1h-1zM501 438h1v1h-1zM505 438h1v1h-1zM501 439h1v1h-1zM505 439h1v1h-1zM501 440h1v1h-1zM505 440h1v1h-1zM501 441h1v1h-1zM505 441h1v1h-1zM502 442h3v1h-3zM508 436h1v1h-1zM508 442h1v1h-1zM512 434h3v1h-3zM511 435h1v1h-1zM515 435h1v1h-1zM515 436h1v1h-1zM515 437h1v1h-1zM514 438h1v1h-1zM513 439h1v1h-1zM512 440h1v1h-1zM511 441h1v1h-1zM511 442h5v1h-5zM519 434h4v1h-4zM518 435h1v1h-1zM518 436h1v1h-1zM518 437h4v1h-4zM522 438h1v1h-1zM522 439h1v1h-1zM522 440h1v1h-1zM518 441h1v1h-1zM522 441h1v1h-1zM519 442h3v1h-3z" fill="#FFFFFF"/><path d="M93 434h1v1h-1zM92 435h2v1h-2zM91 436h1v1h-1zM93 436h1v1h-1zM93 437h1v1h-1zM93 438h1v1h-1zM93 439h1v1h-1zM93 440h1v1h-1zM93 441h1v1h-1zM93 442h1v1h-1zM99 434h3v1h-3zM98 435h1v1h-1zM102 435h1v1h-1zM98 436h1v1h-1zM102 436h1v1h-1zM98 437h1v1h-1zM102 437h1v1h-1zM98 438h1v1h-1zM102 438h1v1h-1zM98 439h1v1h-1zM102 439h1v1h-1zM98 440h1v1h-1zM102 440h1v1h-1zM98 441h1v1h-1zM102 441h1v1h-1zM99 442h3v1h-3zM105 436h1v1h-1zM105 442h1v1h-1zM109 434h3v1h-3zM108 435h1v1h-1zM112 435h1v1h-1zM108 436h1v1h-1zM112 436h1v1h-1zM108 437h1v1h-1zM112 437h1v1h-1zM108 438h1v1h-1zM112 438h1v1h-1zM108 439h1v1h-1zM112 439h1v1h-1zM108 440h1v1h-1zM112 440h1v1h-1zM108 441h1v1h-1zM112 441h1v1h-1zM109 442h3v1h-3zM116 434h3v1h-3zM115 435h1v1h-1zM119 435h1v1h-1zM115 436h1v1h-1zM119 436h1v1h-1zM115 437h1v1h-1zM119 437h1v1h-1zM115 438h1v1h-1zM119 438h1v1h-1zM115 439h1v1h-1zM119 439h1v1h-1zM115 440h1v1h-1zM119 440h1v1h-1zM115 441h1v1h-1zM119 441h1v1h-1zM116 442h3v1h-3zM122 436h1v1h-1zM122 442h1v1h-1zM126 434h3v1h-3zM125 435h1v1h-1zM129 435h1v1h-1zM125 436h1v1h-1zM129 436h1v1h-1zM125 437h1v1h-1zM129 437h1v1h-1zM125 438h1v1h-1zM129 438h1v1h-1zM125 439h1v1h-1zM129 439h1v1h-1zM125 440h1v1h-1zM129 440h1v1h-1zM125 441h1v1h-1zM129 441h1v1h-1zM126 442h3v1h-3zM133 434h3v1h-3zM132 435h1v1h-1zM136 435h1v1h-1zM132 436h1v1h-1zM136 436h1v1h-1zM132 437h1v1h-1zM136 437h1v1h-1zM132 438h1v1h-1zM136 438h1v1h-1zM132 439h1v1h-1zM136 439h1v1h-1zM132 440h1v1h-1zM136 440h1v1h-1zM132 441h1v1h-1zM136 441h1v1h-1zM133 442h3v1h-3z" fill="#0000FF"/><path d="M89 445h1v1h-1zM88 446h2v1h-2zM87 447h1v1h-1zM89 447h1v1h-1zM89 448h1v1h-1zM89 449h1v1h-1zM89 450h1v1h-1zM89 451h1v1h-1zM89 452h1v1h-1zM89 453h1v1h-1zM95 445h3v1h-3zM94 446h1v1h-1zM98 446h1v1h-1zM98 447h1v1h-1zM98 448h1v1h-1zM96 449h2v1h-2zM98 450h1v1h-1zM98 451h1v1h-1zM94 452h1v1h-1zM98 452h1v1h-1zM95 453h3v1h-3zM101 453h1v1h-1zM105 445h3v1h-3zM104 446h1v1h-1zM108 446h1v1h-1zM104 447h1v1h-1zM108 447h1v1h-1zM104 448h1v1h-1zM108 448h1v1h-1zM107 449h2v1h-2zM105 450h2v1h-2zM108 450h1v1h-1zM108 451h1v1h-1zM104 452h1v1h-1zM108 452h1v1h-1zM105 453h3v1h-3zM111 453h1v1h-1zM115 445h3v1h-3zM114 446h1v1h-1zM118 446h1v1h-1zM118 447h1v1h-1zM118 448h1v1h-1zM117 449h1v1h-1zM116 450h1v1h-1zM115 451h1v1h-1zM114 452h1v1h-1zM114 453h5v1h-5zM122 445h3v1h-3zM121 446h1v1h-1zM125 446h1v1h-1zM121 447h1v1h-1zM125 447h1v1h-1zM121 448h1v1h-1zM125 448h1v1h-1zM121 449h1v1h-1zM125 449h1v1h-1zM121 450h1v1h-1zM125 450h1v1h-1zM121 451h1v1h-1zM125 451h1v1h-1zM121 452h1v1h-1zM125 452h1v1h-1zM122 453h3v1h-3zM130 445h1v1h-1zM129 446h2v1h-2zM128 447h1v1h-1zM130 447h1v1h-1zM130 448h1v1h-1zM130 449h1v1h-1zM130 450h1v1h-1zM130 451h1v1h-1zM130 452h1v1h-1zM130 453h1v1h-1zM136 445h3v1h-3zM135 446h1v1h-1zM139 446h1v1h-1zM135 447h1v1h-1zM139 447h1v1h-1zM135 448h1v1h-1zM139 448h1v1h-1zM136 449h3v1h-3zM135 450h1v1h-1zM139 450h1v1h-1zM135 451h1v1h-1zM139 451h1v1h-1zM135 452h1v1h-1zM139 452h1v1h-1zM136 453h3v1h-3z" fill="#0000FF"/><path d="M567 434h1v1h-1zM566 435h2v1h-2zM565 436h1v1h-1zM567 436h1v1h-1zM567 437h1v1h-1zM567 438h1v1h-1zM567 439h1v1h-1zM567 440h1v1h-1zM567 441h1v1h-1zM567 442h1v1h-1zM573 434h3v1h-3zM572 435h1v1h-1zM576 435h1v1h-1zM572 436h1v1h-1zM576 436h1v1h-1zM572 437h1v1h-1zM576 437h1v1h-1zM572 438h1v1h-1zM576 438h1v1h-1zM572 439h1v1h-1zM576 439h1v1h-1zM572 440h1v1h-1zM576 440h1v1h-1zM572 441h1v1h-1zM576 441h1v1h-1zM573 442h3v1h-3zM579 436h1v1h-1zM579 442h1v1h-1zM583 434h3v1h-3zM582 435h1v1h-1zM586 435h1v1h-1zM586 436h1v1h-1zM586 437h1v1h-1zM584 438h2v1h-2zM586 439h1v1h-1zM586 440h1v1h-1zM582 441h1v1h-1zM586 441h1v1h-1zM583 442h3v1h-3zM590 434h3v1h-3zM589 435h1v1h-1zM593 435h1v1h-1zM589 436h1v1h-1zM593 436h1v1h-1zM589 437h1v1h-1zM593 437h1v1h-1zM589 438h1v1h-1zM593 438h1v1h-1zM589 439h1v1h-1zM593 439h1v1h-1zM589 440h1v1h-1zM593 440h1v1h-1zM589 441h1v1h-1zM593 441h1v1h-1zM590 442h3v1h-3zM596 436h1v1h-1zM596 442h1v1h-1zM600 434h3v1h-3zM599 435h1v1h-1zM603 435h1v1h-1zM599 436h1v1h-1zM603 436h1v1h-1zM599 437h1v1h-1zM603 437h1v1h-1zM599 438h1v1h-1zM603 438h1v1h-1zM599 439h1v1h-1zM603 439h1v1h-1zM599 440h1v1h-1zM603 440h1v1h-1zM599 441h1v1h-1zM603 441h1v1h-1zM600 442h3v1h-3zM607 434h3v1h-3zM606 435h1v1h-1zM610 435h1v1h-1zM606 436h1v1h-1zM610 436h1v1h-1zM606 437h1v1h-1zM610 437h1v1h-1zM606 438h1v1h-1zM610 438h1v1h-1zM606 439h1v1h-1zM610 439h1v1h-1zM606 440h1v1h-1zM610 440h1v1h-1zM606 441h1v1h-1zM610 441h1v1h-1zM607 442h3v1h-3z" fill="#0000FF"/><path d="M563 445h1v1h-1zM562 446h2v1h-2zM561 447h1v1h-1zM563 447h1v1h-1zM563 448h1v1h-1zM563 449h1v1h-1zM563 450h1v1h-1zM563 451h1v1h-1zM563 452h1v1h-1zM563 453h1v1h-1zM569 445h3v1h-3zM568 446h1v1h-1zM572 446h1v1h-1zM572 447h1v1h-1zM572 448h1v1h-1zM570 449h2v1h-2zM572 450h1v1h-1zM572 451h1v1h-1zM568 452h1v1h-1zM572 452h1v1h-1zM569 453h3v1h-3zM575 453h1v1h-1zM579 445h3v1h-3zM578 446h1v1h-1zM582 446h1v1h-1zM578 447h1v1h-1zM582 447h1v1h-1zM578 448h1v1h-1zM582 448h1v1h-1zM581 449h2v1h-2zM579 450h2v1h-2zM582 450h1v1h-1zM582 451h1v1h-1zM578 452h1v1h-1zM582 452h1v1h-1zM579 453h3v1h-3zM585 453h1v1h-1zM589 445h3v1h-3zM588 446h1v1h-1zM592 446h1v1h-1zM592 447h1v1h-1zM592 448h1v1h-1zM591 449h1v1h-1zM590 450h1v1h-1zM589 451h1v1h-1zM588 452h1v1h-1zM588 453h5v1h-5zM596 445h3v1h-3zM595 446h1v1h-1zM599 446h1v1h-1zM595 447h1v1h-1zM599 447h1v1h-1zM595 448h1v1h-1zM599 448h1v1h-1zM595 449h1v1h-1zM599 449h1v1h-1zM595 450h1v1h-1zM599 450h1v1h-1zM595 451h1v1h-1zM599 451h1v1h-1zM595 452h1v1h-1zM599 452h1v1h-1zM596 453h3v1h-3zM604 445h1v1h-1zM603 446h2v1h-2zM602 447h1v1h-1zM604 447h1v1h-1zM604 448h1v1h-1zM604 449h1v1h-1zM604 450h1v1h-1zM604 451h1v1h-1zM604 452h1v1h-1zM604 453h1v1h-1zM610 445h3v1h-3zM609 446h1v1h-1zM613 446h1v1h-1zM609 447h1v1h-1zM613 447h1v1h-1zM609 448h1v1h-1zM613 448h1v1h-1zM610 449h3v1h-3zM609 450h1v1h-1zM613 450h1v1h-1zM609 451h1v1h-1zM613 451h1v1h-1zM609 452h1v1h-1zM613 452h1v1h-1zM610 453h3v1h-3z" fill="#0000FF"/></svg>
<div class="a" style="left:61px;top:462px;width:602px;height:143px;background:#fff;border:1px solid #000"></div>
<div class="a" style="left:23px;top:463px;width:16px;height:17px;background:#C0C0C0;box-shadow:inset 1px 1px #808080,inset -1px -1px #fff"></div>
<div class="a" style="left:41px;top:463px;width:16px;height:17px;background:#C0C0C0;box-shadow:inset 1px 1px #fff,inset -1px -1px #808080"></div>
<div class="a" style="left:667px;top:463px;width:16px;height:17px;background:#C0C0C0;box-shadow:inset 1px 1px #808080,inset -1px -1px #fff"></div>
<div class="a" style="left:23px;top:481px;width:16px;height:16px;background:#4040FF;box-shadow:inset 1px 1px #808080,inset -1px -1px #fff"></div>
<div class="a" style="left:41px;top:481px;width:16px;height:16px;background:#C0C0C0;box-shadow:inset 1px 1px #808080,inset -1px -1px #fff"></div>
<div class="a" style="left:667px;top:481px;width:16px;height:16px;background:#C0C0C0;box-shadow:inset 1px 1px #fff,inset -1px -1px #808080"></div>
<div class="a" style="left:23px;top:498px;width:16px;height:16px;background:#FF55FF;box-shadow:inset 1px 1px #808080,inset -1px -1px #fff"></div>
<div class="a" style="left:41px;top:498px;width:16px;height:16px;background:#C0C0C0;box-shadow:inset 1px 1px #808080,inset -1px -1px #fff"></div>
<div class="a" style="left:667px;top:498px;width:16px;height:16px;background:#C0C0C0;box-shadow:inset 1px 1px #fff,inset -1px -1px #808080"></div>
<div class="a" style="left:23px;top:515px;width:16px;height:16px;background:#FF8000;box-shadow:inset 1px 1px #808080,inset -1px -1px #fff"></div>
<div class="a" style="left:41px;top:515px;width:16px;height:16px;background:#C0C0C0;box-shadow:inset 1px 1px #808080,inset -1px -1px #fff"></div>
<div class="a" style="left:667px;top:515px;width:16px;height:16px;background:#C0C0C0;box-shadow:inset 1px 1px #fff,inset -1px -1px #808080"></div>
<div class="a" style="left:23px;top:532px;width:16px;height:16px;background:#FF0000;box-shadow:inset 1px 1px #808080,inset -1px -1px #fff"></div>
<div class="a" style="left:41px;top:532px;width:16px;height:16px;background:#C0C0C0;box-shadow:inset 1px 1px #808080,inset -1px -1px #fff"></div>
<div class="a" style="left:667px;top:532px;width:16px;height:16px;background:#C0C0C0;box-shadow:inset 1px 1px #fff,inset -1px -1px #808080"></div>
<div class="a" style="left:23px;top:549px;width:16px;height:16px;background:#00FF00;box-shadow:inset 1px 1px #808080,inset -1px -1px #fff"></div>
<div class="a" style="left:41px;top:549px;width:16px;height:16px;background:#C0C0C0;box-shadow:inset 1px 1px #808080,inset -1px -1px #fff"></div>
<div class="a" style="left:667px;top:549px;width:16px;height:16px;background:#C0C0C0;box-shadow:inset 1px 1px #fff,inset -1px -1px #808080"></div>
<div class="a" style="left:23px;top:566px;width:16px;height:16px;background:#FFFF00;box-shadow:inset 1px 1px #808080,inset -1px -1px #fff"></div>
<div class="a" style="left:41px;top:566px;width:16px;height:16px;background:#C0C0C0;box-shadow:inset 1px 1px #808080,inset -1px -1px #fff"></div>
<div class="a" style="left:667px;top:566px;width:16px;height:16px;background:#C0C0C0;box-shadow:inset 1px 1px #fff,inset -1px -1px #808080"></div>
<svg class="a" style="left:0;top:0" width="700" height="627"><path d="M49 483.5 L54 488.5 L49 493.5 L44 488.5 Z" fill="#0000FF" stroke="#000" stroke-width="1"/><path d="M675 483.5 L680 488.5 L675 493.5 L670 488.5 Z" fill="#0000FF" stroke="#000" stroke-width="1"/><path d="M49 500.5 L54 505.5 L49 510.5 L44 505.5 Z" fill="#0000FF" stroke="#000" stroke-width="1"/><path d="M675 500.5 L680 505.5 L675 510.5 L670 505.5 Z" fill="#0000FF" stroke="#000" stroke-width="1"/><path d="M49 517.5 L54 522.5 L49 527.5 L44 522.5 Z" fill="#FF8000" stroke="#000" stroke-width="1"/><path d="M675 517.5 L680 522.5 L675 527.5 L670 522.5 Z" fill="#FF8000" stroke="#000" stroke-width="1"/><path d="M49 534.5 L54 539.5 L49 544.5 L44 539.5 Z" fill="#FF8000" stroke="#000" stroke-width="1"/><path d="M675 534.5 L680 539.5 L675 544.5 L670 539.5 Z" fill="#FF8000" stroke="#000" stroke-width="1"/><path d="M49 551.5 L54 556.5 L49 561.5 L44 556.5 Z" fill="#FF8000" stroke="#000" stroke-width="1"/><path d="M675 551.5 L680 556.5 L675 561.5 L670 556.5 Z" fill="#FF8000" stroke="#000" stroke-width="1"/><path d="M49 568.5 L54 573.5 L49 578.5 L44 573.5 Z" fill="#FF8000" stroke="#000" stroke-width="1"/><path d="M675 568.5 L680 573.5 L675 578.5 L670 573.5 Z" fill="#FF8000" stroke="#000" stroke-width="1"/></svg>
<div class="a" style="left:62px;top:463px;width:364px;height:17px;background:#D4D0C8;box-shadow:inset 1px 1px #fff,inset -1px -1px #404040,inset -2px -2px #808080"></div>
<div class="t" style="left:68px;top:467px;font-size:11px;color:#000;">Názov</div>
<div class="a" style="left:426px;top:463px;width:56px;height:17px;background:#D4D0C8;box-shadow:inset 1px 1px #fff,inset -1px -1px #404040,inset -2px -2px #808080"></div>
<div class="t" style="left:432px;top:467px;font-size:11px;color:#000;">Os</div>
<div class="a" style="left:482px;top:463px;width:59px;height:17px;background:#D4D0C8;box-shadow:inset 1px 1px #fff,inset -1px -1px #404040,inset -2px -2px #808080"></div>
<div class="t" style="left:488px;top:467px;font-size:11px;color:#000;">Vyčítaná</div>
<div class="a" style="left:541px;top:463px;width:61px;height:17px;background:#D4D0C8;box-shadow:inset 1px 1px #fff,inset -1px -1px #404040,inset -2px -2px #808080"></div>
<div class="t" style="left:547px;top:467px;font-size:11px;color:#000;">Posledná</div>
<div class="a" style="left:602px;top:463px;width:60px;height:17px;background:#D4D0C8;box-shadow:inset 1px 1px #fff,inset 0 -1px #404040,inset -1px -2px #808080"></div>
<div class="t" style="left:608px;top:467px;font-size:11px;color:#000;">Jednotky</div>
<div class="a" style="left:62px;top:496px;width:600px;height:1px;background:#D4D0C8;"></div>
<div class="a" style="left:62px;top:513px;width:600px;height:1px;background:#D4D0C8;"></div>
<div class="a" style="left:62px;top:530px;width:600px;height:1px;background:#D4D0C8;"></div>
<div class="a" style="left:62px;top:547px;width:600px;height:1px;background:#D4D0C8;"></div>
<div class="a" style="left:62px;top:564px;width:600px;height:1px;background:#D4D0C8;"></div>
<div class="a" style="left:62px;top:581px;width:600px;height:1px;background:#D4D0C8;"></div>
<div class="a" style="left:62px;top:598px;width:600px;height:1px;background:#D4D0C8;"></div>
<div class="a" style="left:426px;top:480px;width:1px;height:124px;background:#D4D0C8;"></div>
<div class="a" style="left:482px;top:480px;width:1px;height:124px;background:#D4D0C8;"></div>
<div class="a" style="left:541px;top:480px;width:1px;height:124px;background:#D4D0C8;"></div>
<div class="a" style="left:602px;top:480px;width:1px;height:124px;background:#D4D0C8;"></div>
<div class="t" style="left:68px;top:484px;font-size:11px;color:#000;letter-spacing:-0.06px">1. GPIO port 22, digitálny vstup s pull-up odporom</div>
<div class="t" style="left:432px;top:484px;font-size:11px;color:#000;letter-spacing:-0.3px">Digital 1</div>
<div class="t" style="left:552px;top:484px;font-size:11px;color:#000;">ON</div>
<div class="t" style="left:68px;top:501px;font-size:11px;color:#000;letter-spacing:0.09px">1. GPIO port 26, digitálny výstup</div>
<div class="t" style="left:432px;top:501px;font-size:11px;color:#000;letter-spacing:-0.3px">Digital 2</div>
<div class="t" style="left:552px;top:501px;font-size:11px;color:#000;">ON</div>
<div class="t" style="left:68px;top:518px;font-size:11px;color:#000;letter-spacing:-0.075px">2. GPIO port 23, trigger na zmeny s pull-up rezistorom</div>
<div class="t" style="left:432px;top:518px;font-size:11px;color:#000;letter-spacing:0.15px">0 .. 300</div>
<div class="t" style="left:558px;top:518px;font-size:11px;color:#000;">0</div>
<div class="t" style="left:68px;top:535px;font-size:11px;color:#000;letter-spacing:-0.037px">2. GPIO port 24, trigger na zmeny ToON (0-&gt;3.3V) s pull-up rezistorom</div>
<div class="t" style="left:432px;top:535px;font-size:11px;color:#000;letter-spacing:0.15px">0 .. 300</div>
<div class="t" style="left:558px;top:535px;font-size:11px;color:#000;">0</div>
<div class="t" style="left:68px;top:552px;font-size:11px;color:#000;letter-spacing:0px">2. GPIO port 25, trigger na zmeny ToOff (3.3-&gt;0V) s pull-up rezistorom</div>
<div class="t" style="left:432px;top:552px;font-size:11px;color:#000;letter-spacing:0.15px">0 .. 300</div>
<div class="t" style="left:558px;top:552px;font-size:11px;color:#000;">0</div>
<div class="t" style="left:68px;top:569px;font-size:11px;color:#000;letter-spacing:-0.1px">2. GPIO port 27, pulzne - šírková modulácia (0-255)</div>
<div class="t" style="left:432px;top:569px;font-size:11px;color:#000;letter-spacing:0.15px">0 .. 300</div>
<div class="t" style="left:546px;top:569px;font-size:11px;color:#000;">250</div>
</body></html>
